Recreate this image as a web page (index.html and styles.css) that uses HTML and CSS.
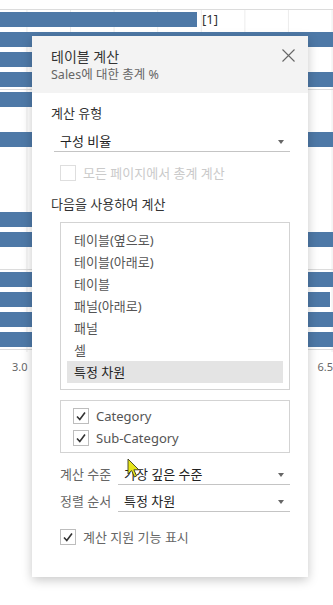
FILE: index.html
```html
<!DOCTYPE html>
<html lang="ko">
<head>
<meta charset="utf-8">
<link rel="stylesheet" href="styles.css">
</head>
<body>
<div class="chart">
  <div class="row"><div class="bar" style="width:197px"></div><span class="ref">[1]</span></div>
  <div class="row"><div class="bar" style="width:333px"></div></div>
  <div class="row"><div class="bar" style="width:260px"></div></div>
  <div class="row sep"><div class="bar" style="width:333px"></div></div>
  <div class="row"><div class="bar" style="width:260px"></div></div>
  <div class="row"></div>
  <div class="row"><div class="bar" style="width:333px"></div></div>
  <div class="row"></div>
  <div class="row"></div>
  <div class="row"></div>
  <div class="row"><div class="bar" style="width:260px"></div></div>
  <div class="row"><div class="bar" style="width:333px"></div></div>
  <div class="row sep"></div>
  <div class="row"><div class="bar" style="width:333px"></div></div>
  <div class="row"><div class="bar" style="width:330px"></div></div>
  <div class="row"><div class="bar" style="width:333px"></div></div>
  <div class="row sep"><div class="bar" style="width:333px"></div></div>
</div>
<div class="axis"><span>3.0</span><span>6.5</span></div>

<div class="dialog">
  <div class="dlg-head">
    <div class="titles">
      <div class="title">테이블 계산</div>
      <div class="subtitle">Sales에 대한 총계 %</div>
    </div>
    <svg class="close" width="13" height="13" viewBox="0 0 13 13"><path d="M0.5 0.5L12.5 12.5M12.5 0.5L0.5 12.5" stroke="#666" stroke-width="1.1" fill="none"/></svg>
  </div>
  <div class="dlg-body">
    <div class="label">계산 유형</div>
    <div class="select wide"><span>구성 비율</span><i class="caret"></i></div>
    <div class="check disabled"><span class="box"></span><span>모든 페이지에서 총계 계산</span></div>
    <div class="label second">다음을 사용하여 계산</div>
    <ul class="list">
      <li>테이블(옆으로)</li>
      <li>테이블(아래로)</li>
      <li>테이블</li>
      <li>패널(아래로)</li>
      <li>패널</li>
      <li>셀</li>
      <li class="sel">특정 차원</li>
    </ul>
    <div class="dims">
      <div class="dim"><span class="box"><svg width="14" height="14" viewBox="0 0 14 14"><path d="M3 7.5L5.8 10.5L11 3.5" stroke="#333" stroke-width="1.6" fill="none"/></svg></span><span>Category</span></div>
      <div class="dim"><span class="box"><svg width="14" height="14" viewBox="0 0 14 14"><path d="M3 7.5L5.8 10.5L11 3.5" stroke="#333" stroke-width="1.6" fill="none"/></svg></span><span>Sub-Category</span></div>
    </div>
    <div class="field first"><span class="flabel">계산 수준</span><div class="select"><span>가장 깊은 수준</span><i class="caret"></i></div></div>
    <div class="field"><span class="flabel">정렬 순서</span><div class="select"><span>특정 차원</span><i class="caret"></i></div></div>
    <div class="check last"><span class="box"><svg width="14" height="14" viewBox="0 0 14 14"><path d="M3 7.5L5.8 10.5L11 3.5" stroke="#333" stroke-width="1.6" fill="none"/></svg></span><span>계산 지원 기능 표시</span></div>
  </div>
</div>

<svg class="cursor" width="14" height="21" viewBox="0 0 14 21"><path d="M1 1L1 16L4.6 12.6L7.4 19L9.6 18L6.9 11.8L11.8 11.8Z" fill="#e6e51a" stroke="#3a3a20" stroke-width="0.9" stroke-linejoin="round"/></svg>
</body>
</html>
```

FILE: styles.css
```css
* { box-sizing: border-box; }
html, body { margin: 0; padding: 0; }
body {
  width: 333px;
  height: 605px;
  overflow: hidden;
  position: relative;
  background: #fff;
  font-family: "Noto Sans", "Noto Sans CJK KR", sans-serif;
  color: #333;
}

/* background chart */
.chart {
  margin-top: 9px;
  border-top: 1px solid #dcdcdc;
  padding-top: 2px;
  background-image: linear-gradient(90deg, #ececec 1px, transparent 1px);
  background-size: 43.6px 100%;
  background-position: 70px 0;
}
.row {
  height: 20px;
  display: flex;
  align-items: flex-start;
}
.row.sep {
  background: linear-gradient(#dcdcdc, #dcdcdc) 0 17px / 100% 1px no-repeat;
}
.bar {
  height: 15px;
  background: #4e79a7;
  flex: none;
}
.ref {
  margin-left: 5px;
  font-size: 13px;
  line-height: 15px;
  color: #333;
}
.axis {
  display: flex;
  justify-content: space-between;
  padding: 8px 0 0 12px;
  font-size: 11px;
  line-height: 14px;
  color: #666;
}

/* dialog */
.dialog {
  position: absolute;
  left: 32px;
  top: 36px;
  width: 276px;
  height: 541px;
  background: #fff;
  box-shadow: 0 3px 10px rgba(0, 0, 0, 0.22);
  overflow: hidden;
}
.dlg-head {
  height: 57px;
  background: #f3f3f3;
  display: flex;
  justify-content: space-between;
  align-items: flex-start;
  padding: 11px 13px 0 19px;
}
.title {
  font-size: 14px;
  line-height: 20px;
  color: #333;
}
.subtitle {
  font-size: 12.5px;
  line-height: 16px;
  color: #666;
}
.close {
  margin-top: 2px;
  display: block;
}
.dlg-body {
  padding: 10px 18px 0 19px;
  font-size: 13px;
}
.label {
  line-height: 20px;
  color: #333;
}
.label.second { margin-top: 13px; }

.select {
  display: flex;
  align-items: center;
  justify-content: space-between;
  height: 20px;
  border-bottom: 1px solid #c4c4c4;
  padding: 0 6px;
  line-height: 19px;
  color: #222;
}
.select.wide {
  margin: 9px 0 0 3px;
}
.caret {
  width: 0;
  height: 0;
  border-left: 3.5px solid transparent;
  border-right: 3.5px solid transparent;
  border-top: 4px solid #666;
  margin-top: 1px;
}

.check {
  display: flex;
  align-items: center;
  gap: 7px;
  margin-left: 9px;
  line-height: 16px;
  color: #666;
}
.check.disabled { margin-top: 13px; color: #cacaca; }
.check.disabled .box { border-color: #dedede; }
.check.last { margin-top: 17px; }
.box {
  width: 16px;
  height: 16px;
  border: 1px solid #bdbdbd;
  background: #fff;
  display: flex;
  align-items: center;
  justify-content: center;
  flex: none;
}
.box svg { display: block; }

.list {
  list-style: none;
  margin: 8px 0 0 9px;
  padding: 6px;
  border: 1px solid #d3d3d3;
}
.list li {
  height: 22px;
  line-height: 22px;
  padding-left: 7px;
  color: #555;
}
.list li.sel {
  background: #e4e4e4;
  color: #222;
}

.dims {
  margin: 10px 0 0 9px;
  border: 1px solid #d3d3d3;
  padding: 4px 0 3px 12px;
}
.dim {
  height: 22px;
  display: flex;
  align-items: center;
  gap: 7px;
  color: #555;
}

.field {
  display: flex;
  align-items: flex-start;
  margin: 7px 0 0 9px;
}
.field.first { margin-top: 12px; }
.flabel {
  width: 58px;
  flex: none;
  line-height: 19px;
  color: #666;
}
.field .select { flex: 1; }

.cursor {
  position: absolute;
  left: 127px;
  top: 458px;
}
```
